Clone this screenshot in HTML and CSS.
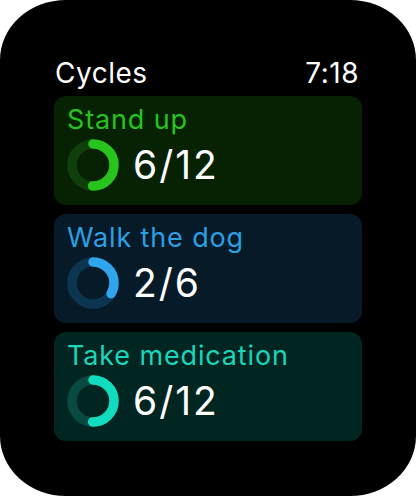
FILE: index.html
```html
<!DOCTYPE html>
<html>
<head>
<meta charset="utf-8">
<link rel="stylesheet" href="styles.css">
</head>
<body>
<div class="watch">
  <div class="screen">
    <div class="header">
      <span class="app">Cycles</span>
      <span class="time">7:18</span>
    </div>
    <div class="list">
      <div class="card green">
        <div class="title">Stand up</div>
        <div class="row">
          <svg class="ring" width="52" height="52" viewBox="0 0 52 52">
            <circle class="track" cx="26" cy="26" r="21"/>
            <circle class="arc" cx="26" cy="26" r="21" stroke-dasharray="65.97 131.95" transform="rotate(-90 26 26)"/>
          </svg>
          <span class="count">6/12</span>
        </div>
      </div>
      <div class="card blue">
        <div class="title">Walk the dog</div>
        <div class="row">
          <svg class="ring" width="52" height="52" viewBox="0 0 52 52">
            <circle class="track" cx="26" cy="26" r="21"/>
            <circle class="arc" cx="26" cy="26" r="21" stroke-dasharray="43.98 131.95" transform="rotate(-90 26 26)"/>
          </svg>
          <span class="count">2/6</span>
        </div>
      </div>
      <div class="card teal">
        <div class="title">Take medication</div>
        <div class="row">
          <svg class="ring" width="52" height="52" viewBox="0 0 52 52">
            <circle class="track" cx="26" cy="26" r="21"/>
            <circle class="arc" cx="26" cy="26" r="21" stroke-dasharray="65.97 131.95" transform="rotate(-90 26 26)"/>
          </svg>
          <span class="count">6/12</span>
        </div>
      </div>
    </div>
  </div>
</div>
</body>
</html>
```

FILE: styles.css
```css
html, body {
  margin: 0;
  padding: 0;
  background: #fff;
}
.watch {
  width: 416px;
  height: 496px;
  background: #000;
  border-radius: 66px / 60px;
  box-sizing: border-box;
  padding: 56px 54px 0 54px;
  font-family: Inter, "Noto Sans", sans-serif;
  color: #fff;
}
.header {
  display: flex;
  justify-content: space-between;
  align-items: baseline;
  font-size: 28px;
  letter-spacing: 0.5px;
  line-height: 34px;
  height: 40px;
  padding: 0 3px 0 1px;
}
.list {
  display: flex;
  flex-direction: column;
  gap: 9px;
}
.card {
  height: 109px;
  border-radius: 12px;
  box-sizing: border-box;
  padding: 8px 13px;
}
.title {
  font-size: 27px;
  letter-spacing: 0.85px;
  line-height: 32px;
}
.row {
  display: flex;
  align-items: center;
  gap: 14px;
  margin-top: 3px;
}
.ring {
  display: block;
}
.ring circle {
  fill: none;
  stroke-width: 9.5;
}
.arc {
  stroke-linecap: round;
}
.count {
  font-size: 39px;
  letter-spacing: 2px;
  line-height: 44px;
}
.green { background: #062203; }
.green .title { color: #27c41d; }
.green .track { stroke: #0f3f0b; }
.green .arc { stroke: #27c41d; }
.blue { background: #061b27; }
.blue .title { color: #2c9fe5; }
.blue .track { stroke: #0b3550; }
.blue .arc { stroke: #2fa5ee; }
.teal { background: #012520; }
.teal .title { color: #19d6bd; }
.teal .track { stroke: #094a40; }
.teal .arc { stroke: #12dcc0; }
```
